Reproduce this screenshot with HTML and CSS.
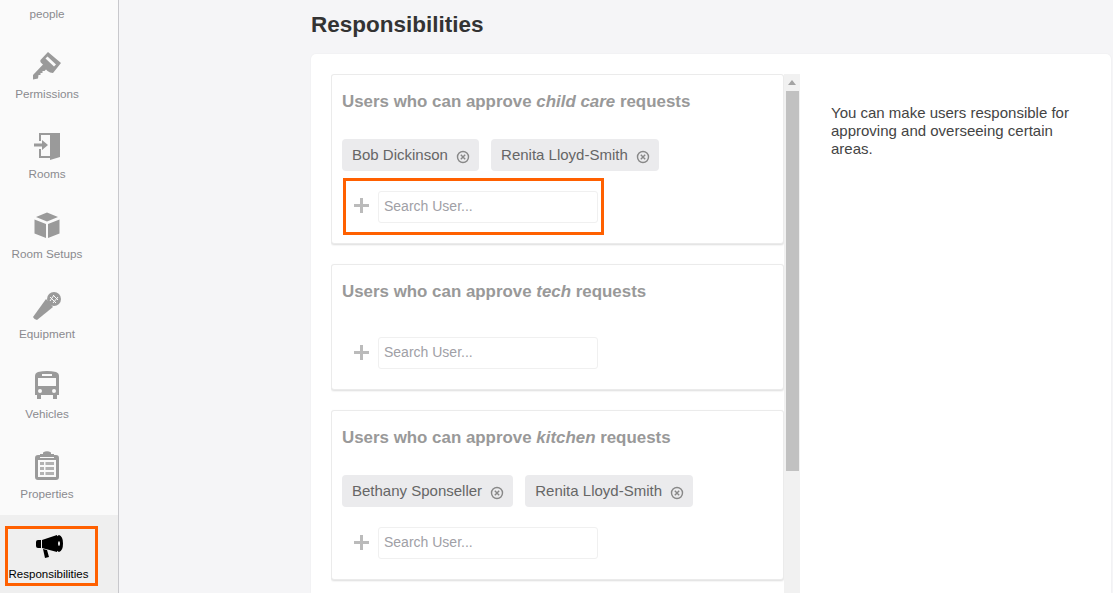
FILE: index.html
```html
<!DOCTYPE html>
<html lang="en">
<head>
<meta charset="utf-8">
<title>Responsibilities</title>
<link rel="stylesheet" href="styles.css">
</head>
<body>
<div class="app">
  <nav class="sidebar">
    <div class="nav-item nav-first"><span class="nav-label">people</span></div>
    <div class="nav-item">
      <svg class="nav-icon" viewBox="0 0 30 30"><path d="M16 1 L29 12 L21 22 Q18 22 15.500 20 L14 18.500 L12.500 20 L10.500 20 L10.500 22 L8.500 22 L8.500 24 L6.500 24 L6 27.500 L1 28.500 L1 24 L11 13.500 Q7.500 11 8.500 9 Z M15.500 5.500 L13.500 7.500 L22 15.500 L24 13.500 Z" fill-rule="evenodd"/></svg>
      <span class="nav-label">Permissions</span>
    </div>
    <div class="nav-item">
      <svg class="nav-icon" viewBox="0 0 30 30"><path d="M7 2 H28 V4 H9 V10 H7 Z M7 18 H9 V25 H18 V27 H7 Z"/><path d="M18 4 L28 2 V26 L18 29 Z"/><path d="M2 12.500 H10 V9 L16 14 L10 19 V15.500 H2 Z"/></svg>
      <span class="nav-label">Rooms</span>
    </div>
    <div class="nav-item">
      <svg class="nav-icon" viewBox="0 0 30 30"><path d="M15 1.500 L26 6 L15 10.500 L4 6 Z M2.500 8.500 L14 13 V27 L2.500 22.500 Z M27.500 8.500 V22.500 L16 27 V13 Z"/></svg>
      <span class="nav-label">Room Setups</span>
    </div>
    <div class="nav-item">
      <svg class="nav-icon" viewBox="0 0 30 30"><path d="M14 8 L21 16 L5 29 Q2.500 29 1 26 Z"/><circle cx="22" cy="8" r="7"/><path d="M18 6 L24 12 M21 4 L26 9 M18 10 L22 4 M21 12 L26 6" stroke="#fafafa" stroke-width="1" fill="none"/></svg>
      <span class="nav-label">Equipment</span>
    </div>
    <div class="nav-item">
      <svg class="nav-icon" viewBox="0 0 30 30"><path d="M6 1 Q15 -1 24 1 Q27 2 27 5 V24 H25 V28 H21 V24 H9 V28 H5 V24 H3 V5 Q3 2 6 1 Z M10 3 V5 H20 V3 Z M6 7 V15 H24 V7 Z M8 18 A2 2 0 1 0 8 22 A2 2 0 1 0 8 18 Z M22 18 A2 2 0 1 0 22 22 A2 2 0 1 0 22 18 Z" fill-rule="evenodd"/></svg>
      <span class="nav-label">Vehicles</span>
    </div>
    <div class="nav-item">
      <svg class="nav-icon" viewBox="0 0 30 30"><path d="M11 3 V1.500 Q15 -1 19 1.500 V3 H22 V6 H8 V3 Z"/><path d="M6 4 H8 V7 H22 V4 H24 Q27 4 27 7 V26 Q27 29 24 29 H6 Q3 29 3 26 V7 Q3 4 6 4 Z M6 9 V26 H24 V9 Z" fill-rule="evenodd"/><path d="M8 11 H12 V14 H8 Z M13.500 11 H22 V14 H13.500 Z M8 16 H12 V19 H8 Z M13.500 16 H22 V19 H13.500 Z M8 21 H12 V24 H8 Z M13.500 21 H22 V24 H13.500 Z" opacity=".75"/></svg>
      <span class="nav-label">Properties</span>
    </div>
    <div class="nav-item nav-active">
      <div class="nav-mark">
        <svg class="nav-icon" viewBox="0 0 30 30"><path d="M2 10 Q2 8 4 8 H7 V16 H4 Q2 16 2 14 Z"/><path d="M8 8 L23 3 V20 L8 16 Z"/><path d="M9 17 L13 18 L15 25 L11 26 Z"/><path d="M25 3 Q29 4 29 11.500 Q29 19 25 20 Q21 19 21 11.500 Q21 4 25 3 Z M25 9 Q24 9.500 24 11.500 Q24 13.500 25 14 Q26 13.500 26 11.500 Q26 9.500 25 9 Z" fill-rule="evenodd"/></svg>
        <span class="nav-label">Responsibilities</span>
      </div>
    </div>
  </nav>

  <main class="main">
    <h1 class="page-title">Responsibilities</h1>
    <section class="panel">
      <div class="list">
        <div class="list-inner">
          <article class="card">
            <h2 class="card-title">Users who can approve <em>child care</em> requests</h2>
            <div class="chips">
              <span class="chip">Bob Dickinson <svg class="chip-x" viewBox="0 0 14 14"><circle cx="7" cy="7" r="5.500"/><path d="M4.800 4.800 L9.200 9.200 M9.200 4.800 L4.800 9.200"/></svg></span>
              <span class="chip">Renita Lloyd-Smith <svg class="chip-x" viewBox="0 0 14 14"><circle cx="7" cy="7" r="5.500"/><path d="M4.800 4.800 L9.200 9.200 M9.200 4.800 L4.800 9.200"/></svg></span>
            </div>
            <div class="add-row add-row-marked">
              <span class="plus"></span>
              <input class="search" type="text" placeholder="Search User...">
            </div>
          </article>
          <article class="card card-empty">
            <h2 class="card-title">Users who can approve <em>tech</em> requests</h2>
            <div class="add-row">
              <span class="plus"></span>
              <input class="search" type="text" placeholder="Search User...">
            </div>
          </article>
          <article class="card">
            <h2 class="card-title">Users who can approve <em>kitchen</em> requests</h2>
            <div class="chips">
              <span class="chip">Bethany Sponseller <svg class="chip-x" viewBox="0 0 14 14"><circle cx="7" cy="7" r="5.500"/><path d="M4.800 4.800 L9.200 9.200 M9.200 4.800 L4.800 9.200"/></svg></span>
              <span class="chip">Renita Lloyd-Smith <svg class="chip-x" viewBox="0 0 14 14"><circle cx="7" cy="7" r="5.500"/><path d="M4.800 4.800 L9.200 9.200 M9.200 4.800 L4.800 9.200"/></svg></span>
            </div>
            <div class="add-row">
              <span class="plus"></span>
              <input class="search" type="text" placeholder="Search User...">
            </div>
          </article>
        </div>
        <div class="scrollbar">
          <span class="scroll-arrow"></span>
          <span class="scroll-thumb"></span>
        </div>
      </div>
      <p class="help">You can make users responsible for approving and overseeing certain areas.</p>
    </section>
  </main>
</div>
</body>
</html>
```

FILE: styles.css
```css
* { box-sizing: border-box; }
html, body { margin: 0; height: 100%; overflow: hidden; }
body {
  background: #f5f5f7;
  font-family: "Liberation Sans", Arial, sans-serif;
  color: #444;
}
.app { display: flex; height: 593px; overflow: hidden; }

.sidebar {
  width: 119px;
  flex: none;
  background: #fafafa;
  border-right: 1px solid #c8c8cc;
  display: flex;
  flex-direction: column;
  overflow: hidden;
}
.nav-item {
  flex: none;
  height: 80px;
  padding: 16px 24px 0 0;
  display: flex;
  flex-direction: column;
  align-items: center;
}
.nav-first { height: 35px; padding-top: 7px; }
.nav-icon { width: 30px; height: 30px; fill: #9a9a9a; display: block; flex: none; }
.nav-label { font-size: 11.700px; line-height: 14px; color: #8a8a8f; margin-top: 6px; white-space: nowrap; }
.nav-first .nav-label { margin-top: 0; }
.nav-active { background: #efefef; padding: 11px 20px 0 5px; align-items: flex-start; }
.nav-mark {
  width: 93px;
  height: 60px;
  border: 3px solid #ff6000;
  display: flex;
  flex-direction: column;
  align-items: center;
  padding: 3px 6px 0 0;
}
.nav-active .nav-icon { fill: #000; }
.nav-active .nav-label { color: #000; margin-top: 5px; font-size: 11.500px; }

.main { flex: 1; min-width: 0; padding: 0 2px 0 192px; display: flex; flex-direction: column; }
.page-title { margin: 0; height: 54px; font-size: 22.500px; line-height: 50px; font-weight: 700; color: #333; }
.panel {
  flex: 1;
  min-height: 0;
  background: #fff;
  border-radius: 5px 5px 0 0;
  padding: 20px 0 0 20px;
  display: flex;
  box-shadow: 0 0 2px rgba(0,0,0,.06);
}
.list { width: 469px; flex: none; display: flex; overflow: hidden; }
.list-inner { width: 453px; flex: none; display: flex; flex-direction: column; gap: 20px; }
.card {
  flex: none;
  height: 170px;
  background: #fff;
  border: 1px solid #ebebeb;
  border-radius: 3px;
  box-shadow: 0 1px 2px rgba(0,0,0,.14);
  padding: 0 10px;
}
.card-empty { height: 126px; }
.card-title { margin: 0; height: 64px; padding-top: 17px; font-size: 16.900px; line-height: 20px; font-weight: 700; color: #999; }
.card-title em { font-style: italic; }
.chips { display: flex; gap: 12px; height: 32px; }
.chip {
  display: flex;
  align-items: center;
  height: 32px;
  padding: 0 9px 2px 10px;
  background: #ebebed;
  border-radius: 4px;
  font-size: 15px;
  color: #666;
  white-space: pre;
}
.chip-x { width: 14px; height: 14px; margin: 5px 0 0 4px; fill: none; stroke: #888; stroke-width: 1.400; }
.add-row {
  display: flex;
  align-items: center;
  gap: 9px;
  width: 255px;
  height: 32px;
  margin: 20px 0 0 4px;
  padding-left: 8px;
}
.card-empty .add-row { margin-top: 8px; }
.add-row-marked { height: 51px; width: 255px; margin-top: 10px; outline: 3px solid #ff6000; }
.plus { width: 15px; height: 15px; flex: none; margin-top: -2px; background: linear-gradient(#bbb,#bbb) center/15px 3px no-repeat, linear-gradient(#bbb,#bbb) center/3px 15px no-repeat; }
.search {
  width: 220px;
  height: 32px;
  border: 1px solid #f0f0f0;
  border-radius: 3px;
  background: #fff;
  padding: 0 5px 2px;
  font: 14px "Liberation Sans", Arial, sans-serif;
  color: #444;
}
.search::placeholder { color: #a0a0a6; opacity: 1; }
.scrollbar { width: 16px; flex: none; background: #f1f1f1; display: flex; flex-direction: column; align-items: center; }
.scroll-arrow { width: 0; height: 0; margin-top: 6px; border: 4px solid transparent; border-top: 0; border-bottom: 5px solid #a3a3a3; }
.scroll-thumb { width: 13px; height: 380px; margin-top: 6px; background: #c1c1c1; }
.help { margin: 30px 0 0 31px; width: 250px; font-size: 15px; line-height: 18px; color: #444; }
```
